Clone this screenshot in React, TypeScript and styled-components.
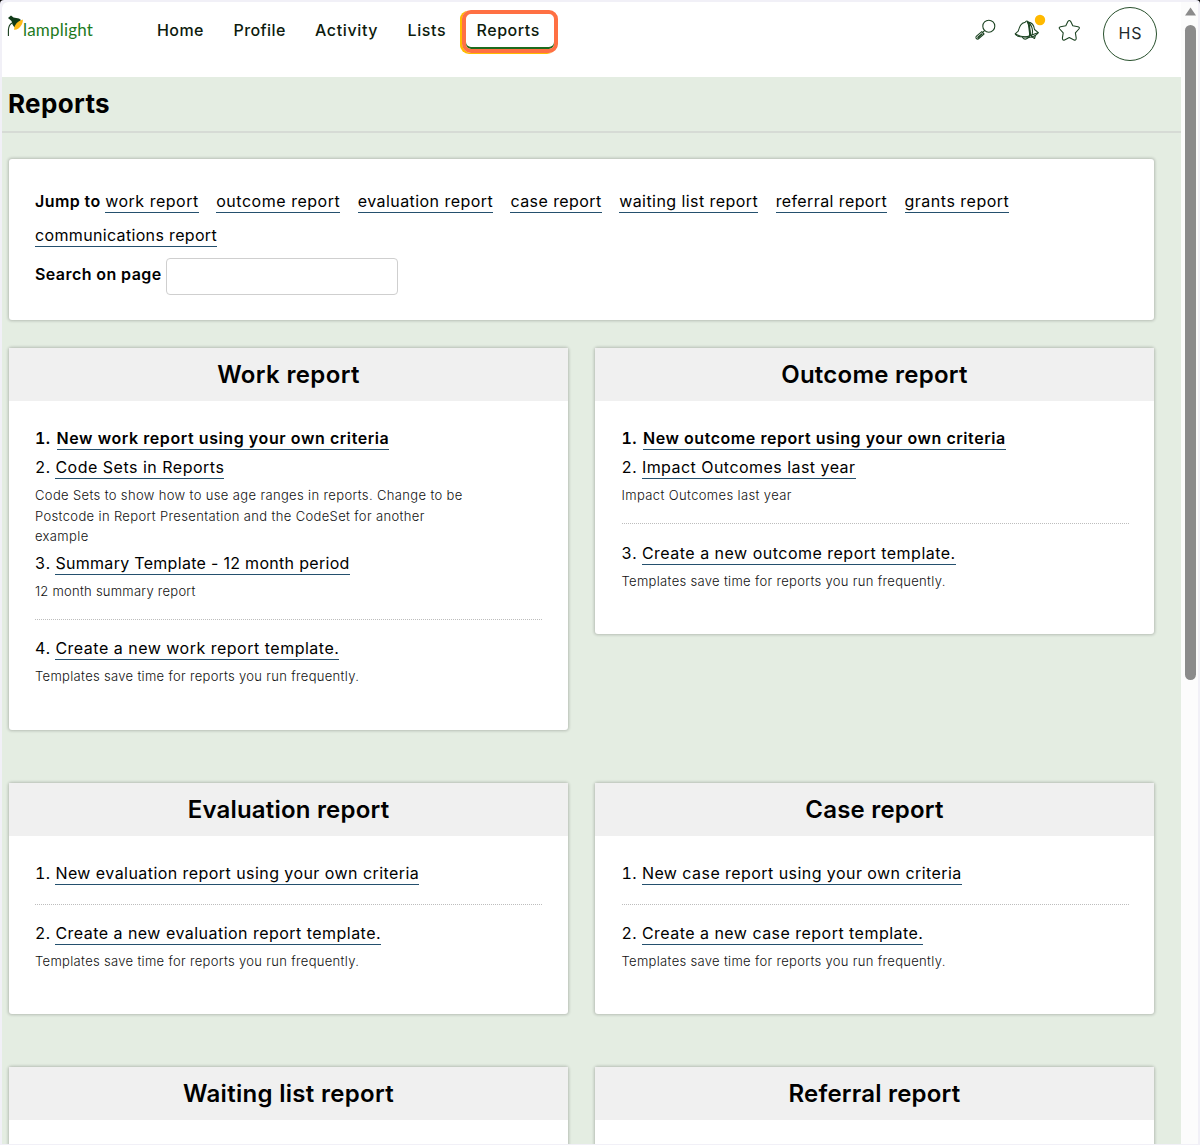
import React from 'react';
import styled, { createGlobalStyle, css } from 'styled-components';

const Global = createGlobalStyle`
  * { box-sizing: border-box; }
  body { margin: 0; background: #000; font-family: Inter, "Liberation Sans", sans-serif; color: #000; overflow: hidden; }
`;

const Frame = styled.div`
  width: 1200px;
  height: 1145px;
  padding: 2px 2px 1px;
  display: flex;
  overflow: hidden;
  background: #f1f0f7;
  border-radius: 4px 4px 0 0;
`;
const Page = styled.div`
  width: 1179px;
  height: 1142px;
  overflow: hidden;
  background: #e4ede2;
  border-top-left-radius: 6px;
`;
const Scrollbar = styled.div`
  width: 17px;
  display: flex;
  flex-direction: column;
  align-items: center;
  padding: 5px 0 0 2px;
  background: #fcfcfc;
`;
const Thumb = styled.div`
  width: 11px;
  height: 655px;
  margin-top: 9px;
  border-radius: 6px;
  background: #8b8b8b;
`;

const Header = styled.header`
  height: 75px;
  display: flex;
  align-items: flex-start;
  justify-content: space-between;
  padding-right: 24px;
  background: #fff;
`;
const Left = styled.div`
  display: flex;
`;
const Logo = styled.div`
  display: flex;
  width: 141px;
  padding: 12px 0 0 5px;
`;
const LogoText = styled.span`
  margin: 4px 0 0 -1px;
  font: 400 17px/24px Lato, sans-serif;
  letter-spacing: 0.2px;
  color: #1d7a1d;
`;
const Nav = styled.nav`
  display: flex;
  padding-top: 8px;
`;
const NavLink = styled.a<{ $w: number; $ls?: number; $active?: boolean }>`
  width: ${p => p.$w}px;
  height: 42px;
  padding-left: 14px;
  white-space: nowrap;
  font-size: 16px;
  line-height: 40px;
  font-weight: 500;
  letter-spacing: ${p => p.$ls ?? 0.4}px;
  color: #0d1b0d;
  ${p => p.$active && css`
    width: 96px;
    height: 43px;
    margin-left: 2px;
    padding-left: 11px;
    line-height: 32px;
    border: 4px solid #ff7043;
    border-radius: 9px;
    box-shadow: inset 0 -2px #1d6b1d, -3px 0 0 -1px #ffbb00, -2px 1px 0 #ffbb00;
  `}
`;
const Tools = styled.div`
  display: flex;
  align-items: flex-start;
  padding-top: 5px;
`;
const Avatar = styled.div`
  width: 54px;
  height: 54px;
  border: 1px solid #28502c;
  border-radius: 50%;
  text-align: center;
  font-size: 16px;
  line-height: 51px;
  letter-spacing: 0.8px;
  padding-left: 1px;
  color: #1f2a2c;
`;

const TitleBar = styled.div`
  height: 56px;
  padding: 9px 0 0 6px;
  border-bottom: 2px solid #d6dbd5;
`;
const Title = styled.h1`
  margin: 0;
  font-size: 26px;
  line-height: 35px;
  font-weight: 700;
  letter-spacing: 0.35px;
`;
const Content = styled.main`
  padding: 26px 27px 0 7px;
`;
const Box = styled.section`
  background: #fff;
  border-radius: 3px;
  box-shadow: 0 0 3px 1px rgba(0, 0, 0, 0.2);
`;
const JumpBox = styled(Box)`
  height: 161px;
  padding: 25px 26px;
`;
const Row = styled.div`
  display: flex;
  flex-wrap: wrap;
  align-items: center;
  font-size: 16px;
  line-height: 21px;
`;
const JumpItem = styled.span`
  height: 34px;
  padding-top: 7px;
  margin-right: 17.4px;
  white-space: nowrap;
`;
const Strong = styled.strong`
  font-weight: 600;
  letter-spacing: 0.42px;
`;
const SearchLabel = styled(Strong)`
  padding-top: 2px;
`;
const Link = styled.a<{ $ls?: number; $bold?: boolean }>`
  display: inline-block;
  height: 22px;
  line-height: 21px;
  border-bottom: 1px solid #24506e;
  white-space: nowrap;
  font-weight: ${p => (p.$bold ? 600 : 400)};
  letter-spacing: ${p => p.$ls ?? 0.45}px;
`;
const Search = styled.input`
  width: 232px;
  height: 37px;
  margin: 6px 0 0 4.5px;
  border: 1px solid #cfcfcf;
  border-radius: 4px;
  background: #fff;
`;
const Grid = styled.div`
  display: grid;
  grid-template-columns: 559px 559px;
  column-gap: 27px;
  row-gap: 53px;
  align-items: start;
  margin-top: 28px;
`;
const CardTitle = styled.h2<{ $ls?: number }>`
  height: 53px;
  margin: 0;
  text-align: center;
  font-size: 24px;
  line-height: 53px;
  font-weight: 600;
  letter-spacing: ${p => p.$ls ?? 0.2}px;
  background: #f0f0f0;
`;
const Card = styled(Box)<{ $h: number }>`
  height: ${p => p.$h}px;
`;
const CardBody = styled.div`
  padding: 23px 26px;
  ${Card}:nth-child(even) & { padding: 23px 25px 23px 26.5px; }
`;
const Item = styled.div<{ $bold?: boolean }>`
  display: flex;
  height: 29px;
  padding-top: 4px;
  font-size: 16px;
  line-height: 21px;
  font-weight: ${p => (p.$bold ? 600 : 400)};
`;
const Num = styled.span<{ $bold?: boolean }>`
  width: ${p => (p.$bold ? 21.5 : 20.4)}px;
  letter-spacing: 0.4px;
  font-variant-numeric: tabular-nums;
`;
const Desc = styled.p<{ $ls?: number }>`
  width: 450px;
  margin: 3px 0 2px;
  font-size: 13px;
  line-height: 20.5px;
  font-weight: 300;
  white-space: pre-line;
  letter-spacing: ${p => p.$ls ?? 0.32}px;
  color: #111;
`;
const Divider = styled.div`
  margin: 15.5px 0 14.5px;
  border-top: 1px dotted #bdbdbd;
  ${Desc} + & { margin-top: 17.6px; }
`;

type Entry = { text: string; ls?: number; bold?: boolean; desc?: string; dls?: number; template?: boolean };
type Report = { title: string; h: number; ls?: number; items: Entry[] };

const SAVE = 'Templates save time for reports you run frequently.';
const reports: Report[] = [
  {
    title: 'Work report', h: 382, ls: 0.35, items: [
      { text: 'New work report using your own criteria', bold: true, ls: 0.58 },
      { text: 'Code Sets in Reports', ls: 0.5, dls: 0.36, desc: 'Code Sets to show how to use age ranges in reports. Change to be\nPostcode in Report Presentation and the CodeSet for another\nexample' },
      { text: 'Summary Template - 12 month period', ls: 0.3, desc: '12 month summary report', dls: 0.25 },
      { text: 'Create a new work report template.', ls: 0.5, desc: SAVE, template: true },
    ],
  },
  {
    title: 'Outcome report', h: 286, ls: 0.25, items: [
      { text: 'New outcome report using your own criteria', bold: true, ls: 0.55 },
      { text: 'Impact Outcomes last year', ls: 0.46, desc: 'Impact Outcomes last year', dls: 0.37 },
      { text: 'Create a new outcome report template.', ls: 0.49, desc: SAVE, template: true },
    ],
  },
  {
    title: 'Evaluation report', h: 231, items: [
      { text: 'New evaluation report using your own criteria', ls: 0.44 },
      { text: 'Create a new evaluation report template.', ls: 0.47, desc: SAVE, template: true },
    ],
  },
  {
    title: 'Case report', h: 231, items: [
      { text: 'New case report using your own criteria', ls: 0.44 },
      { text: 'Create a new case report template.', ls: 0.47, desc: SAVE, template: true },
    ],
  },
  { title: 'Waiting list report', h: 231, ls: 0.3, items: [] },
  { title: 'Referral report', h: 231, items: [] },
];

const jumps: { text: string; ls?: number }[] = [
  { text: 'work report', ls: 0.52 },
  { text: 'outcome report', ls: 0.53 },
  { text: 'evaluation report', ls: 0.44 },
  { text: 'case report', ls: 0.43 },
  { text: 'waiting list report', ls: 0.44 },
  { text: 'referral report', ls: 0.4 },
  { text: 'grants report', ls: 0.5 },
  { text: 'communications report', ls: 0.34 },
];

const nav: { text: string; w: number; ls?: number; active?: boolean }[] = [
  { text: 'Home', w: 76.5 },
  { text: 'Profile', w: 81.5 },
  { text: 'Activity', w: 92.5, ls: 0.62 },
  { text: 'Lists', w: 66, ls: 0.6 },
  { text: 'Reports', w: 96, ls: 0.55, active: true },
];

const LampIcon = () => (
  <svg width="17" height="24" viewBox="0 0 17 24">
    <path d="M1.4 22V16Q1.6 11 5 9" fill="none" stroke="#173d1c" strokeWidth="1.1" />
    <path d="M1 4L4 1.5L6.5 3.5L12 4.5L14 6L7.5 13.5L5.5 10.5L4.5 7Z" fill="#103b18" />
    <path d="M15.8 5.5C16.5 9.5 12 16.5 7 15.7Q7 8.2 15.8 5.5Z" fill="#ffba17" />
  </svg>
);

const ToolIcons = () => (
  <svg width="128" height="42" viewBox="975 7 128 42" fill="none" stroke="#1d4423" strokeWidth="1.1" strokeLinejoin="round" strokeLinecap="round">
    <circle cx="988.8" cy="26.2" r="6" />
    <path d="M984.5 30.7L982.8 32.4M981.8 31.7L984 34L978.2 39Q976.7 39.5 976 38Q975.7 37 976.5 36.2Z" />
    <path d="M978 37.3L981.8 34" strokeWidth="1.6" />
    <path d="M1025.2 22.2Q1026.6 19.8 1028.3 22.1Q1033.7 22.7 1034.5 29.5L1038.3 32.6Q1034.5 37.3 1029.5 37.2L1020.3 36.7Q1016 36 1015.2 33.8L1018.2 31.2C1019.6 26.6 1020.7 22.9 1025.2 22.2Z" />
    <path d="M1027.2 21.7Q1031 28 1029.3 37M1028 22Q1034.8 28 1031.4 36.8M1015.4 34Q1024 38.5 1029.6 35.8L1038 32.8M1022.5 37.5Q1024.5 40.2 1027 38.5L1029.4 37M1031.5 36.6L1034.5 38.5L1035.4 35.5" />
    <path d="M1029 25L1030.2 35" strokeWidth="2" />
    <circle cx="1040" cy="20" r="5.2" fill="#ffb900" stroke="none" />
    <path d="M1068 21.3Q1069.3 19.8 1070.6 21.3L1072.8 25.8L1078 26.7Q1080.2 27.3 1078.9 29L1075.4 32.9L1076.2 38.1Q1076.3 40.8 1074 39.9L1069.3 37.6L1064.6 39.9Q1062.3 40.8 1062.4 38.1L1063.2 32.9L1059.7 29Q1058.4 27.3 1060.6 26.7L1065.8 25.8Z" />
  </svg>
);

export default function App() {
  return (
    <>
      <Global />
      <Frame>
        <Page>
          <Header>
            <Left>
              <Logo><LampIcon /><LogoText>lamplight</LogoText></Logo>
              <Nav>
                {nav.map(n => <NavLink key={n.text} $w={n.w} $ls={n.ls} $active={n.active}>{n.text}</NavLink>)}
              </Nav>
            </Left>
            <Tools>
              <ToolIcons />
              <Avatar>HS</Avatar>
            </Tools>
          </Header>
          <TitleBar><Title>Reports</Title></TitleBar>
          <Content>
            <JumpBox>
              <Row>
                {jumps.map((j, i) => (
                  <JumpItem key={j.text}>
                    {i === 0 && <Strong>Jump to </Strong>}
                    <Link $ls={j.ls}>{j.text}</Link>
                  </JumpItem>
                ))}
              </Row>
              <Row><SearchLabel>Search on page</SearchLabel><Search /></Row>
            </JumpBox>
            <Grid>
              {reports.map(r => (
                <Card key={r.title} $h={r.h}>
                  <CardTitle $ls={r.ls}>{r.title}</CardTitle>
                  <CardBody>
                    {r.items.map((it, i) => (
                      <React.Fragment key={it.text}>
                        {it.template && <Divider />}
                        <Item $bold={it.bold}>
                          <Num $bold={it.bold}>{i + 1}.</Num>
                          <Link $ls={it.ls} $bold={it.bold}>{it.text}</Link>
                        </Item>
                        {it.desc && <Desc $ls={it.dls}>{it.desc}</Desc>}
                      </React.Fragment>
                    ))}
                  </CardBody>
                </Card>
              ))}
            </Grid>
          </Content>
        </Page>
        <Scrollbar>
          <svg width="11" height="9" viewBox="0 0 11 9"><path d="M5.5 .5L11 8.5H0Z" fill="#8b8b8b" /></svg>
          <Thumb />
        </Scrollbar>
      </Frame>
    </>
  );
}
